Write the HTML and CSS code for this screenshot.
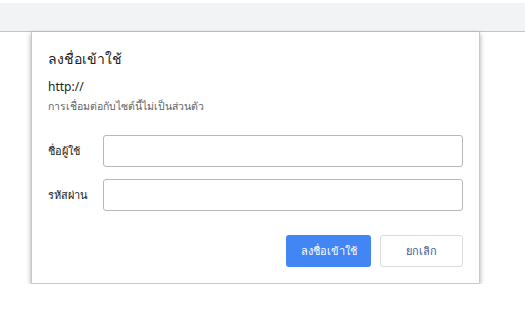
FILE: index.html
```html
<!DOCTYPE html>
<html>
<head>
  <meta charset="utf-8">
  <meta name="viewport" content="width=device-width, initial-scale=1">
  <link rel="stylesheet" href="styles.css">
</head>
<body>
  <div class="toolbar"></div>

  <div class="dialog">
    <h1 class="title">ลงชื่อเข้าใช้</h1>
    <p class="origin">http://</p>
    <p class="warning">การเชื่อมต่อกับไซต์นี้ไม่เป็นส่วนตัว</p>

    <form class="fields">
      <div class="row">
        <label for="user" class="label">ชื่อผู้ใช้</label>
        <input type="text" id="user" class="field">
      </div>
      <div class="row">
        <label for="pass" class="label">รหัสผ่าน</label>
        <input type="password" id="pass" class="field">
      </div>
    </form>

    <div class="buttons">
      <button class="btn primary" type="button">ลงชื่อเข้าใช้</button>
      <button class="btn cancel" type="button">ยกเลิก</button>
    </div>
  </div>
</body>
</html>
```

FILE: styles.css
```css
html, body {
  margin: 0;
  background: #fff;
  font-family: "Noto Sans", "Liberation Sans", sans-serif;
  color: #202124;
}

.toolbar {
  margin-top: 3px;
  height: 28px;
  background-color: #f1f3f4;
  border-bottom: 1px solid #c4c4c4;
}

.dialog {
  box-sizing: border-box;
  width: 449px;
  height: 252px;
  margin-left: 31px;
  padding: 16px;
  background: #fff;
  border: 1px solid #c8c8c8;
  border-top: none;
  border-radius: 0 0 2px 2px;
  box-shadow: 0 2px 5px rgba(0,0,0,0.35);
  display: flex;
  flex-direction: column;
}

.title {
  margin: 0;
  font-size: 14px;
  font-weight: normal;
  line-height: 22px;
}

.origin {
  margin: 8px 0 0;
  font-size: 12px;
  line-height: 18px;
}

.warning {
  margin: 2px 0 0;
  font-size: 10.5px;
  line-height: 16px;
  color: #5f6368;
}

.fields {
  margin: 21px 0 0;
  display: flex;
  flex-direction: column;
  gap: 12px;
}

.row {
  display: flex;
  align-items: center;
}

.label {
  width: 55px;
  font-size: 11px;
}

.field {
  box-sizing: border-box;
  width: 360px;
  height: 32px;
  border: 1px solid #b8b8b8;
  border-radius: 3px;
  margin: 0;
  outline: none;
}

.buttons {
  margin-top: auto;
  display: flex;
  justify-content: flex-end;
  gap: 9px;
}

.btn {
  box-sizing: border-box;
  height: 32px;
  border-radius: 3px;
  font-family: inherit;
  font-size: 11px;
  margin: 0;
}

.primary {
  width: 85px;
  background: #4285f4;
  border: none;
  color: #fff;
}

.cancel {
  width: 83px;
  background: #fff;
  border: 1px solid #dadce0;
  color: #3c5a9a;
}
```
